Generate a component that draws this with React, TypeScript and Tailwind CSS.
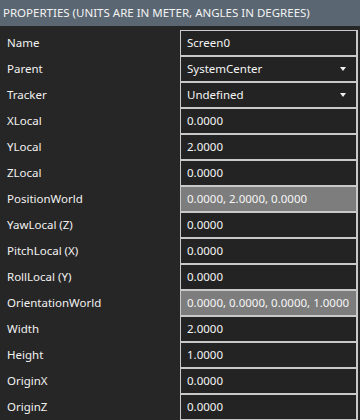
type Row = {
  label: string;
  value: string;
  kind?: "text" | "select" | "readonly";
};

const rows: Row[] = [
  { label: "Name", value: "Screen0" },
  { label: "Parent", value: "SystemCenter", kind: "select" },
  { label: "Tracker", value: "Undefined", kind: "select" },
  { label: "XLocal", value: "0.0000" },
  { label: "YLocal", value: "2.0000" },
  { label: "ZLocal", value: "0.0000" },
  { label: "PositionWorld", value: "0.0000, 2.0000, 0.0000", kind: "readonly" },
  { label: "YawLocal (Z)", value: "0.0000" },
  { label: "PitchLocal (X)", value: "0.0000" },
  { label: "RollLocal (Y)", value: "0.0000" },
  { label: "OrientationWorld", value: "0.0000, 0.0000, 0.0000, 1.0000", kind: "readonly" },
  { label: "Width", value: "2.0000" },
  { label: "Height", value: "1.0000" },
  { label: "OriginX", value: "0.0000" },
  { label: "OriginZ", value: "0.0000" },
];

function PropertyRow({ label, value, kind = "text" }: Row) {
  return (
    <div className="flex h-[26px]">
      <div className="flex w-[180px] shrink-0 items-center pl-[7px] text-[#f2f2f2]">{label}</div>
      <div
        className={`flex w-[178px] items-center justify-between whitespace-nowrap border border-r-2 border-[#c9c9c9] pl-[6px] pr-[10px] text-[#f5f5f5] ${
          kind === "readonly" ? "bg-[#7d7d7d]" : "bg-[#232323]"
        }`}
      >
        <span>{value}</span>
        {kind === "select" && (
          <svg width="6" height="4" viewBox="0 0 6 4" aria-hidden>
            <path d="M0 0h6L3 4z" fill="#f0f0f0" />
          </svg>
        )}
      </div>
    </div>
  );
}

export default function App() {
  return (
    <div
      className="h-[420px] w-[360px] overflow-hidden bg-[#262626] text-[11.5px] leading-none"
      style={{ fontFamily: '"Noto Sans", "Open Sans", sans-serif' }}
    >
      <div className="flex h-[26px] items-center whitespace-nowrap bg-[#5a6672] pl-[3px] text-[#f3f3f3]">
        PROPERTIES (UNITS ARE IN METER, ANGLES IN DEGREES)
      </div>
      <div className="pt-[4px]">
        {rows.map((r) => (
          <PropertyRow key={r.label} {...r} />
        ))}
      </div>
    </div>
  );
}
